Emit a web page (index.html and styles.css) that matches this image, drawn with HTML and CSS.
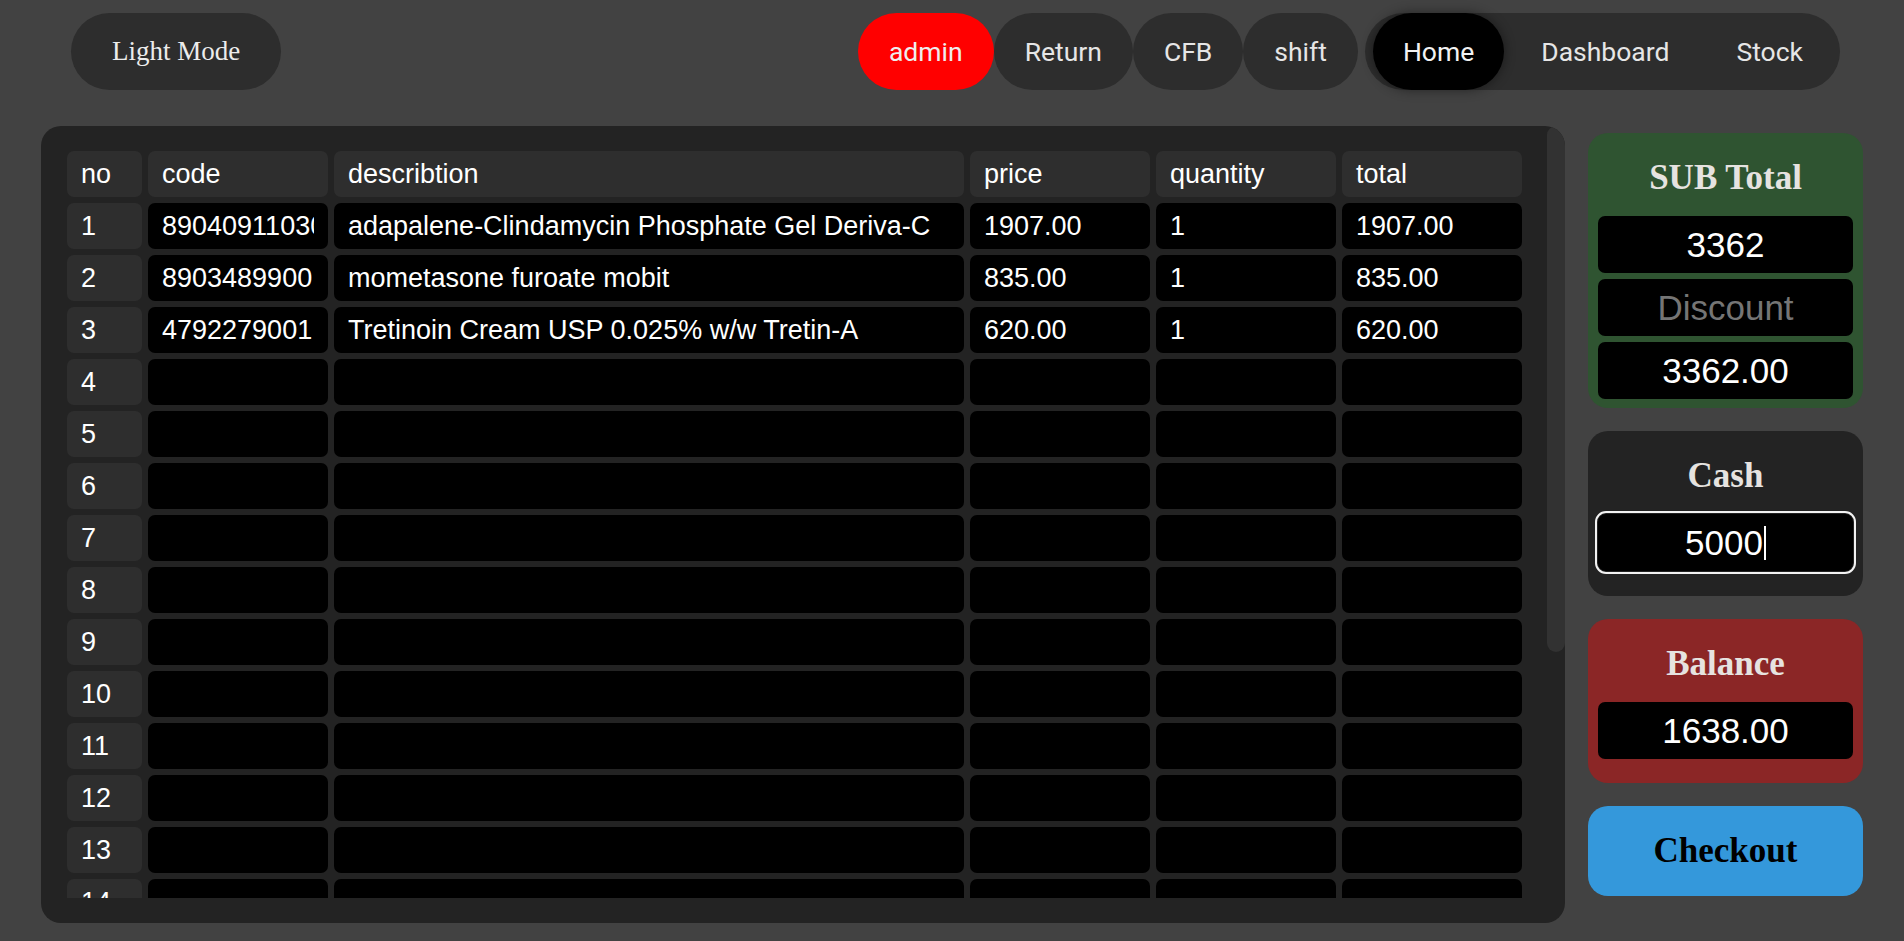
FILE: index.html
```html
<!DOCTYPE html>
<html lang="en">
<head>
<meta charset="utf-8">
<title>POS</title>
<link rel="stylesheet" href="styles.css">
</head>
<body>
<header class="topbar">
  <button class="mode-btn">Light Mode</button>
  <nav class="nav">
    <button class="pill pill-admin">admin</button>
    <button class="pill">Return</button>
    <button class="pill">CFB</button>
    <button class="pill">shift</button>
    <div class="tabs">
      <button class="tab tab-active">Home</button>
      <button class="tab">Dashboard</button>
      <button class="tab">Stock</button>
    </div>
  </nav>
</header>
<main class="main">
  <section class="panel">
    <div class="scroll">
      <table class="grid">
        <colgroup>
          <col class="col-no"><col class="col-code"><col class="col-desc"><col class="col-num"><col class="col-num"><col class="col-num">
        </colgroup>
        <thead>
          <tr><th>no</th><th>code</th><th>describtion</th><th>price</th><th>quantity</th><th>total</th></tr>
        </thead>
        <tbody>
          <tr><td class="num">1</td><td class="cell"><input class="in" value="8904091103064"></td><td class="cell"><input class="in" value="adapalene-Clindamycin Phosphate Gel Deriva-C"></td><td class="cell"><input class="in" value="1907.00"></td><td class="cell"><input class="in" value="1"></td><td class="cell"><input class="in" value="1907.00"></td></tr>
          <tr><td class="num">2</td><td class="cell"><input class="in" value="8903489900"></td><td class="cell"><input class="in" value="mometasone furoate mobit"></td><td class="cell"><input class="in" value="835.00"></td><td class="cell"><input class="in" value="1"></td><td class="cell"><input class="in" value="835.00"></td></tr>
          <tr><td class="num">3</td><td class="cell"><input class="in" value="4792279001"></td><td class="cell"><input class="in" value="Tretinoin Cream USP 0.025% w/w Tretin-A"></td><td class="cell"><input class="in" value="620.00"></td><td class="cell"><input class="in" value="1"></td><td class="cell"><input class="in" value="620.00"></td></tr>
          <tr><td class="num">4</td><td class="cell"><input class="in"></td><td class="cell"><input class="in"></td><td class="cell"><input class="in"></td><td class="cell"><input class="in"></td><td class="cell"><input class="in"></td></tr>
          <tr><td class="num">5</td><td class="cell"><input class="in"></td><td class="cell"><input class="in"></td><td class="cell"><input class="in"></td><td class="cell"><input class="in"></td><td class="cell"><input class="in"></td></tr>
          <tr><td class="num">6</td><td class="cell"><input class="in"></td><td class="cell"><input class="in"></td><td class="cell"><input class="in"></td><td class="cell"><input class="in"></td><td class="cell"><input class="in"></td></tr>
          <tr><td class="num">7</td><td class="cell"><input class="in"></td><td class="cell"><input class="in"></td><td class="cell"><input class="in"></td><td class="cell"><input class="in"></td><td class="cell"><input class="in"></td></tr>
          <tr><td class="num">8</td><td class="cell"><input class="in"></td><td class="cell"><input class="in"></td><td class="cell"><input class="in"></td><td class="cell"><input class="in"></td><td class="cell"><input class="in"></td></tr>
          <tr><td class="num">9</td><td class="cell"><input class="in"></td><td class="cell"><input class="in"></td><td class="cell"><input class="in"></td><td class="cell"><input class="in"></td><td class="cell"><input class="in"></td></tr>
          <tr><td class="num">10</td><td class="cell"><input class="in"></td><td class="cell"><input class="in"></td><td class="cell"><input class="in"></td><td class="cell"><input class="in"></td><td class="cell"><input class="in"></td></tr>
          <tr><td class="num">11</td><td class="cell"><input class="in"></td><td class="cell"><input class="in"></td><td class="cell"><input class="in"></td><td class="cell"><input class="in"></td><td class="cell"><input class="in"></td></tr>
          <tr><td class="num">12</td><td class="cell"><input class="in"></td><td class="cell"><input class="in"></td><td class="cell"><input class="in"></td><td class="cell"><input class="in"></td><td class="cell"><input class="in"></td></tr>
          <tr><td class="num">13</td><td class="cell"><input class="in"></td><td class="cell"><input class="in"></td><td class="cell"><input class="in"></td><td class="cell"><input class="in"></td><td class="cell"><input class="in"></td></tr>
          <tr><td class="num">14</td><td class="cell"><input class="in"></td><td class="cell"><input class="in"></td><td class="cell"><input class="in"></td><td class="cell"><input class="in"></td><td class="cell"><input class="in"></td></tr>
          <tr><td class="num">15</td><td class="cell"><input class="in"></td><td class="cell"><input class="in"></td><td class="cell"><input class="in"></td><td class="cell"><input class="in"></td><td class="cell"><input class="in"></td></tr>
          <tr><td class="num">16</td><td class="cell"><input class="in"></td><td class="cell"><input class="in"></td><td class="cell"><input class="in"></td><td class="cell"><input class="in"></td><td class="cell"><input class="in"></td></tr>
          <tr><td class="num">17</td><td class="cell"><input class="in"></td><td class="cell"><input class="in"></td><td class="cell"><input class="in"></td><td class="cell"><input class="in"></td><td class="cell"><input class="in"></td></tr>
          <tr><td class="num">18</td><td class="cell"><input class="in"></td><td class="cell"><input class="in"></td><td class="cell"><input class="in"></td><td class="cell"><input class="in"></td><td class="cell"><input class="in"></td></tr>
          <tr><td class="num">19</td><td class="cell"><input class="in"></td><td class="cell"><input class="in"></td><td class="cell"><input class="in"></td><td class="cell"><input class="in"></td><td class="cell"><input class="in"></td></tr>
          <tr><td class="num">20</td><td class="cell"><input class="in"></td><td class="cell"><input class="in"></td><td class="cell"><input class="in"></td><td class="cell"><input class="in"></td><td class="cell"><input class="in"></td></tr>
        </tbody>
      </table>
    </div>
    <div class="thumb"></div>
  </section>
  <aside class="side">
    <div class="card card-sub">
      <h2 class="card-title">SUB Total</h2>
      <input class="field" value="3362">
      <input class="field" placeholder="Discount">
      <input class="field" value="3362.00">
    </div>
    <div class="card card-cash">
      <h2 class="card-title">Cash</h2>
      <div class="field field-focus"><span>5000</span><span class="caret"></span></div>
    </div>
    <div class="card card-balance">
      <h2 class="card-title">Balance</h2>
      <input class="field" value="1638.00">
    </div>
    <button class="checkout">Checkout</button>
  </aside>
</main>
</body>
</html>
```

FILE: styles.css
```css
* { box-sizing: border-box; }

html, body {
  margin: 0;
  height: 100%;
}

body {
  background: #424242;
  font-family: "Liberation Serif", "Times New Roman", serif;
  overflow: hidden;
}

button {
  border: 0;
  cursor: pointer;
}

/* top bar */
.topbar {
  display: flex;
  justify-content: space-between;
  align-items: flex-start;
  padding: 13px 64px 0 71px;
  height: 90px;
  margin-bottom: 36px;
}

.mode-btn {
  height: 77px;
  padding: 0 41px;
  border-radius: 40px;
  background: #2d2d2d;
  color: #ececec;
  font-family: "Liberation Serif", "Times New Roman", serif;
  font-size: 27px;
}

.nav {
  display: flex;
  align-items: center;
}

.pill {
  height: 77px;
  padding: 0 31px;
  border-radius: 40px;
  background: #2d2d2d;
  color: #e6e6e6;
  font-family: Roboto, "Noto Sans", sans-serif;
  font-size: 26.5px;
}

.pill-admin {
  background: #ff0000;
  color: #eeeeee;
}

.tabs {
  display: flex;
  gap: 7px;
  margin-left: 7px;
  padding: 0 7px 0 8px;
  height: 77px;
  border-radius: 40px;
  background: #2d2d2d;
}

.tab {
  height: 77px;
  padding: 0 30px;
  border-radius: 40px;
  background: transparent;
  color: #e6e6e6;
  font-family: Roboto, "Noto Sans", sans-serif;
  font-size: 26.5px;
}

.tab-active {
  background: #000;
  color: #f2f2f2;
  box-shadow: 0 0 12px rgba(0, 0, 0, 0.45);
}

/* main area */
.main {
  display: flex;
  gap: 23px;
  padding: 0 41px;
}

.panel {
  position: relative;
  flex: 1;
  background: #232323;
  border-radius: 20px;
  padding-bottom: 25px;
  overflow: hidden;
}

.scroll {
  height: 772px;
  overflow-y: auto;
  scrollbar-width: none;
  padding: 19px 37px 20px 20px;
}

.thumb {
  position: absolute;
  top: 0;
  right: 0;
  width: 18px;
  height: 526px;
  border-radius: 9px;
  background: #323232;
}

.grid {
  width: 100%;
  table-layout: fixed;
  border-collapse: separate;
  border-spacing: 6px;
  font-family: "Liberation Sans", Arial, sans-serif;
  font-size: 27px;
  color: #fff;
}

.col-no { width: 75px; }
.col-code { width: 180px; }
.col-num { width: 180px; }

.grid th,
.grid td {
  height: 46px;
  padding: 0;
  border-radius: 7px;
  text-align: left;
  font-weight: normal;
  vertical-align: middle;
}

.grid th {
  background: #2e2e2e;
  padding-left: 14px;
}

.grid td.num {
  background: #2e2e2e;
  padding-left: 14px;
}

.grid td.cell {
  background: #000;
}

.in {
  display: block;
  width: 100%;
  height: 46px;
  padding: 0 14px;
  border: 0;
  background: transparent;
  color: #fff;
  font-family: "Liberation Sans", Arial, sans-serif;
  font-size: 27px;
  outline: none;
}

/* side */
.side {
  width: 275px;
  flex: none;
  display: flex;
  flex-direction: column;
  gap: 23px;
  padding-top: 7px;
}

.card {
  border-radius: 20px;
  padding: 0 10px 24px;
  display: flex;
  flex-direction: column;
  gap: 6px;
}

.card-sub {
  background: #2f5431;
  padding-bottom: 9px;
}

.card-cash {
  background: #232323;
  padding-bottom: 25px;
}

.card-balance {
  background: #8b2626;
  padding-bottom: 24px;
}

.card-title {
  margin: 25px 0 12px;
  text-align: center;
  font-family: "Liberation Serif", "Times New Roman", serif;
  font-size: 35px;
  font-weight: bold;
  line-height: 40px;
  color: #e6e3e0;
}

.field {
  display: block;
  width: 100%;
  height: 57px;
  border: 0;
  border-radius: 7px;
  background: #000;
  color: #fff;
  text-align: center;
  font-family: "Liberation Sans", Arial, sans-serif;
  font-size: 35px;
  outline: none;
}

.field::placeholder {
  color: #757575;
}

.field-focus {
  display: flex;
  align-items: center;
  justify-content: center;
  outline: 2px solid #f2f2f2;
  outline-offset: 1px;
  border-radius: 8px;
}

.caret {
  width: 2px;
  height: 34px;
  background: #fff;
  margin-left: 1px;
}

.checkout {
  height: 90px;
  border-radius: 20px;
  background: #3498db;
  color: #000;
  font-family: "Liberation Serif", "Times New Roman", serif;
  font-size: 35px;
  font-weight: bold;
}
```
